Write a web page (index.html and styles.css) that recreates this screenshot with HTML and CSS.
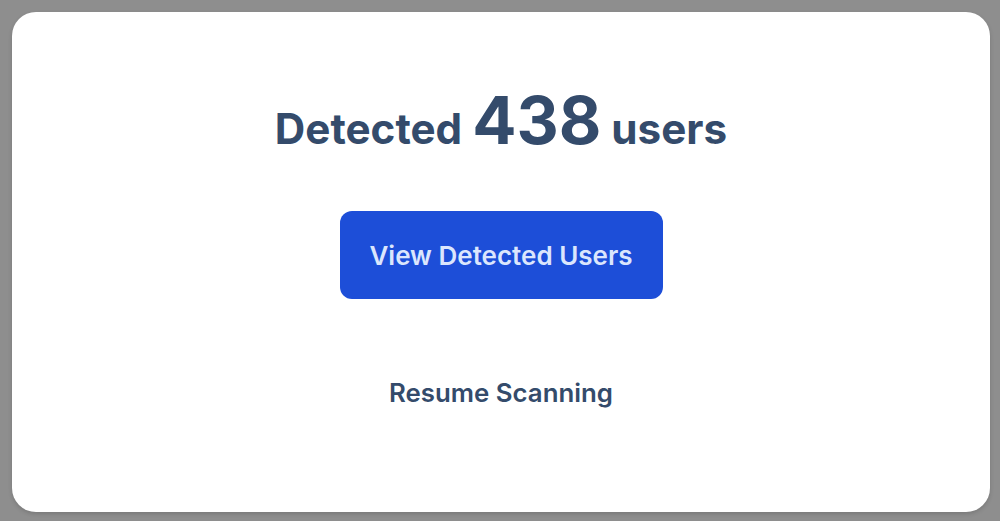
FILE: index.html
```html
<!DOCTYPE html>
<html>
<head>
<meta charset="utf-8">
<link rel="stylesheet" href="styles.css">
</head>
<body>
<div class="frame">
  <div class="card">
    <h1 class="title">Detected <span class="count">438</span> users</h1>
    <button class="primary">View Detected Users</button>
    <button class="secondary">Resume Scanning</button>
  </div>
</div>
</body>
</html>
```
FILE: styles.css
```css
html, body {
  margin: 0;
  padding: 0;
  height: 100%;
  background: #8e8e8e;
}
body {
  font-family: Inter, "Noto Sans", sans-serif;
}
.frame {
  box-sizing: border-box;
  height: 521px;
  padding: 12px 10px 9px 12px;
  display: flex;
}
.card {
  flex: 1;
  background: #ffffff;
  border-radius: 24px;
  display: flex;
  flex-direction: column;
  align-items: center;
  box-shadow: 0 2px 4px rgba(0,0,0,0.15);
}
.title {
  margin: 69px 0 0 0;
  font-size: 42.2px;
  font-weight: 700;
  color: #344b6b;
  line-height: 80px;
}
.count {
  font-size: 65.5px;
}
.primary {
  margin-top: 42px;
  width: 323px;
  height: 88px;
  border: none;
  border-radius: 12px;
  background: #1d4ed8;
  color: #dbe6fd;
  font-family: Inter, "Noto Sans", sans-serif;
  font-size: 26px;
  font-weight: 600;
}
.secondary {
  margin-top: 78px;
  border: none;
  background: transparent;
  color: #344b6b;
  font-family: Inter, "Noto Sans", sans-serif;
  font-size: 25.8px;
  font-weight: 600;
  padding: 0;
}
```
